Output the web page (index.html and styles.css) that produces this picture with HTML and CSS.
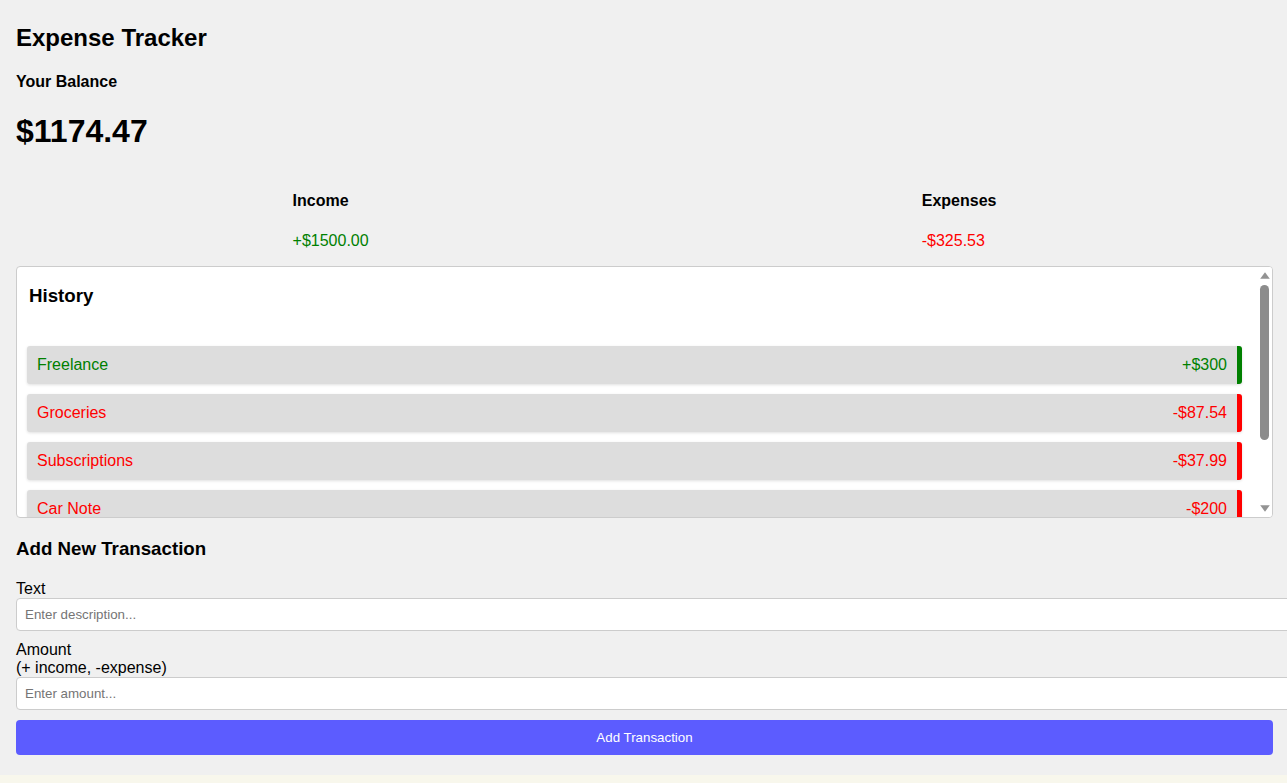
FILE: index.html
```html
<!DOCTYPE html>
<html lang="en">
<head>
<meta charset="UTF-8">
<title>Expense Tracker</title>
<link rel="stylesheet" href="styles.css">
</head>
<body>
<div class="container">
  <h2 class="title">Expense Tracker</h2>
  <h4 class="balance-label">Your Balance</h4>
  <h1 class="balance">$1174.47</h1>

  <div class="inc-exp">
    <div class="col">
      <h4>Income</h4>
      <p class="money plus">+$1500.00</p>
    </div>
    <div class="col">
      <h4>Expenses</h4>
      <p class="money minus">-$325.53</p>
    </div>
  </div>

  <div class="history">
    <div class="history-scroll">
      <h3>History</h3>
      <ul class="list">
        <li class="item plus"><span>Freelance</span><span>+$300</span></li>
        <li class="item minus"><span>Groceries</span><span>-$87.54</span></li>
        <li class="item minus"><span>Subscriptions</span><span>-$37.99</span></li>
        <li class="item minus"><span>Car Note</span><span>-$200</span></li>
      </ul>
    </div>
    <div class="scrollbar" aria-hidden="true">
      <svg class="sb-arrow" width="10" height="7" viewBox="0 0 10 7"><polygon points="5,0.3 9.8,6.7 0.2,6.7" fill="#939393"/></svg>
      <div class="sb-track"><div class="sb-thumb"></div></div>
      <svg class="sb-arrow" width="10" height="7" viewBox="0 0 10 7"><polygon points="0.2,0.3 9.8,0.3 5,6.7" fill="#939393"/></svg>
    </div>
  </div>

  <h3 class="add-title">Add New Transaction</h3>
  <form class="form">
    <div class="form-control">
      <label for="text">Text</label>
      <input type="text" id="text" placeholder="Enter description...">
    </div>
    <div class="form-control">
      <label for="amount">Amount <br>(+ income, -expense)</label>
      <input type="number" id="amount" placeholder="Enter amount...">
    </div>
    <button class="btn" type="button">Add Transaction</button>
  </form>
</div>
</body>
</html>
```

FILE: styles.css
```css
html, body {
  overflow-x: hidden;
}

body {
  margin: 0;
  background: #f8f7ec;
  font-family: "Liberation Sans", Arial, sans-serif;
  color: #000;
}

.container {
  background: #f0f0f0;
  padding: 4px 14px 20px 16px;
  box-shadow: 0 1px 6px rgba(0, 0, 0, 0.07);
}

.title {
  font-size: 24px;
  margin: 19.92px 0;
}

.balance-label {
  font-size: 16px;
  margin: 21.28px 0;
}

.balance {
  font-size: 32px;
  margin: 21.44px 0;
}

.inc-exp {
  display: flex;
  justify-content: space-around;
}

.inc-exp h4 {
  font-size: 16px;
  margin: 21.28px 0;
}

.money {
  margin: 16px 0;
  font-size: 16px;
}

.plus {
  color: #008000;
}

.minus {
  color: #ff0000;
}

.history {
  position: relative;
  background: #fff;
  border: 1px solid #cccccc;
  border-radius: 4px;
  height: 250px;
  overflow: hidden;
}

.history-scroll {
  height: 250px;
  overflow: hidden;
  padding-right: 15px;
  display: flow-root;
}

.history h3 {
  font-size: 18.72px;
  margin: 18.72px 12px;
}

.list {
  list-style: none;
  margin: 0;
  padding: 20px 15px 10px 10px;
}

.item {
  display: flex;
  justify-content: space-between;
  background: #dddddd;
  padding: 10px;
  margin-bottom: 10px;
  border-radius: 3px;
  box-shadow: 0 1px 3px rgba(0, 0, 0, 0.12);
  font-size: 16px;
}

.item.plus {
  border-right: 5px solid #008000;
}

.item.minus {
  border-right: 5px solid #ff0000;
}

/* drawn scrollbar over the right edge of the history panel */
.scrollbar {
  position: absolute;
  top: 0;
  right: 0;
  bottom: 0;
  width: 15px;
  display: flex;
  flex-direction: column;
  align-items: center;
  padding: 5px 0 5px;
  box-sizing: border-box;
  background: #fff;
}

.sb-arrow {
  display: block;
  flex: none;
}

.sb-track {
  flex: 1;
  width: 9px;
  padding: 6px 0 0;
}

.sb-thumb {
  width: 9px;
  height: 155px;
  border-radius: 5px;
  background: #8c8c8c;
}

.add-title {
  font-size: 18.72px;
  margin: 20.72px 0 20px;
}

.form {
  margin: 0;
}

.form-control {
  margin-bottom: 10px;
}

.form-control label {
  display: block;
  font-size: 16px;
}

.form-control input {
  display: block;
  width: 100%;
  margin: 0;
  padding: 8px;
  border: 1px solid #cccccc;
  border-radius: 4px;
  font-family: "Liberation Sans", Arial, sans-serif;
  font-size: 13.333px;
  background: #fff;
}

.form-control input::placeholder {
  color: #757575;
}

.btn {
  display: block;
  width: 100%;
  margin-top: 10px;
  padding: 10px;
  border: none;
  border-radius: 4px;
  background: #5c5cff;
  color: #fff;
  font-family: "Liberation Sans", Arial, sans-serif;
  font-size: 13.333px;
}
```
